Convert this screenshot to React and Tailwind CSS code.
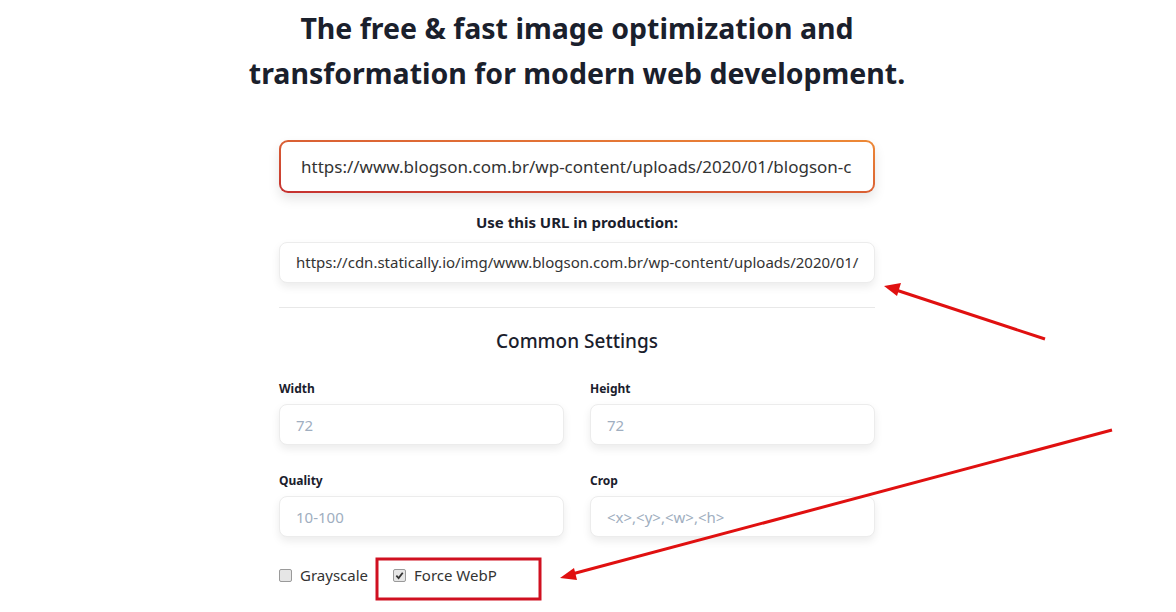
import React from 'react';

const font = { fontFamily: '"Noto Sans", "Open Sans", sans-serif' };

function Field({ label, placeholder }) {
  return (
    <div className="flex flex-col">
      <label className="text-[12px] font-bold text-[#1a202c] mb-[6px] leading-[18px]">{label}</label>
      <input
        readOnly
        placeholder={placeholder}
        className="h-[41px] w-full rounded-lg border border-[#ececec] bg-white px-4 text-[15px] text-[#333] placeholder:text-[#a0aec0] shadow-[0_4px_8px_rgba(0,0,0,0.08)] outline-none"
      />
    </div>
  );
}

function Check({ checked, label }) {
  return (
    <label className="flex items-center gap-[8px] text-[15px] text-[#333]">
      <span className="flex h-[13px] w-[13px] items-center justify-center rounded-[2px] border border-[#9a9a9a] bg-[#e6e6e6]">
        {checked && (
          <svg width="9" height="9" viewBox="0 0 10 10">
            <path d="M1.5 5.2 L4 7.8 L8.6 2" fill="none" stroke="#333" strokeWidth="2" />
          </svg>
        )}
      </span>
      {label}
    </label>
  );
}

export default function App() {
  return (
    <div className="relative h-[612px] w-[1176px] overflow-hidden bg-white" style={font}>
      <div className="w-[1154px]">
        <h1 className="mx-auto pt-[6px] text-center text-[28.5px] font-bold leading-[45px] text-[#1a202c]">
          The free &amp; fast image optimization and
          <br />
          transformation for modern web development.
        </h1>

        <div className="mx-auto mt-[44px] w-[596px]">
          <div className="rounded-[9px] bg-gradient-to-tr from-[#c53030] to-[#ed8936] p-[2px] shadow-[0_6px_12px_rgba(0,0,0,0.1)]">
            <div className="flex h-[49px] items-center overflow-hidden whitespace-nowrap rounded-[7px] bg-white pl-[20px] text-[17px] text-[#333]">
              https://www.blogson.com.br/wp-content/uploads/2020/01/blogson-c
            </div>
          </div>

          <p className="mt-[18px] text-center text-[15px] font-bold leading-[22px] text-[#1a202c]">
            Use this URL in production:
          </p>

          <div className="mt-[9px] flex h-[41px] items-center overflow-hidden whitespace-nowrap rounded-lg border border-[#ececec] bg-white pl-[16px] text-[15px] text-[#333] shadow-[0_4px_8px_rgba(0,0,0,0.08)]">
            https://cdn.statically.io/img/www.blogson.com.br/wp-content/uploads/2020/01/
          </div>

          <hr className="mt-[24px] border-t border-[#e8e8e8]" />

          <h2 className="mt-[18px] text-center text-[19px] font-medium leading-[30px] text-[#1a202c]">
            Common Settings
          </h2>

          <div className="mt-[24px] grid grid-cols-2 gap-x-[26px] gap-y-[27px]">
            <Field label="Width" placeholder="72" />
            <Field label="Height" placeholder="72" />
            <Field label="Quality" placeholder="10-100" />
            <Field label="Crop" placeholder="<x>,<y>,<w>,<h>" />
          </div>

          <div className="mt-[27px] flex items-center gap-[25px]">
            <Check label="Grayscale" />
            <Check checked label="Force WebP" />
          </div>
        </div>
      </div>

      {/* annotations */}
      <svg className="pointer-events-none absolute left-0 top-0" width="1176" height="612">
        <line x1="1045" y1="339" x2="896" y2="290" stroke="#e01010" strokeWidth="3" />
        <polygon points="884,286 901,283 897,296" fill="#e01010" />
        <line x1="1112" y1="430" x2="572" y2="574" stroke="#e01010" strokeWidth="3" />
        <polygon points="560,578 574,568 577,580" fill="#e01010" />
        <rect x="377" y="559" width="163" height="40" fill="none" stroke="#d01020" strokeWidth="3" />
      </svg>
    </div>
  );
}
